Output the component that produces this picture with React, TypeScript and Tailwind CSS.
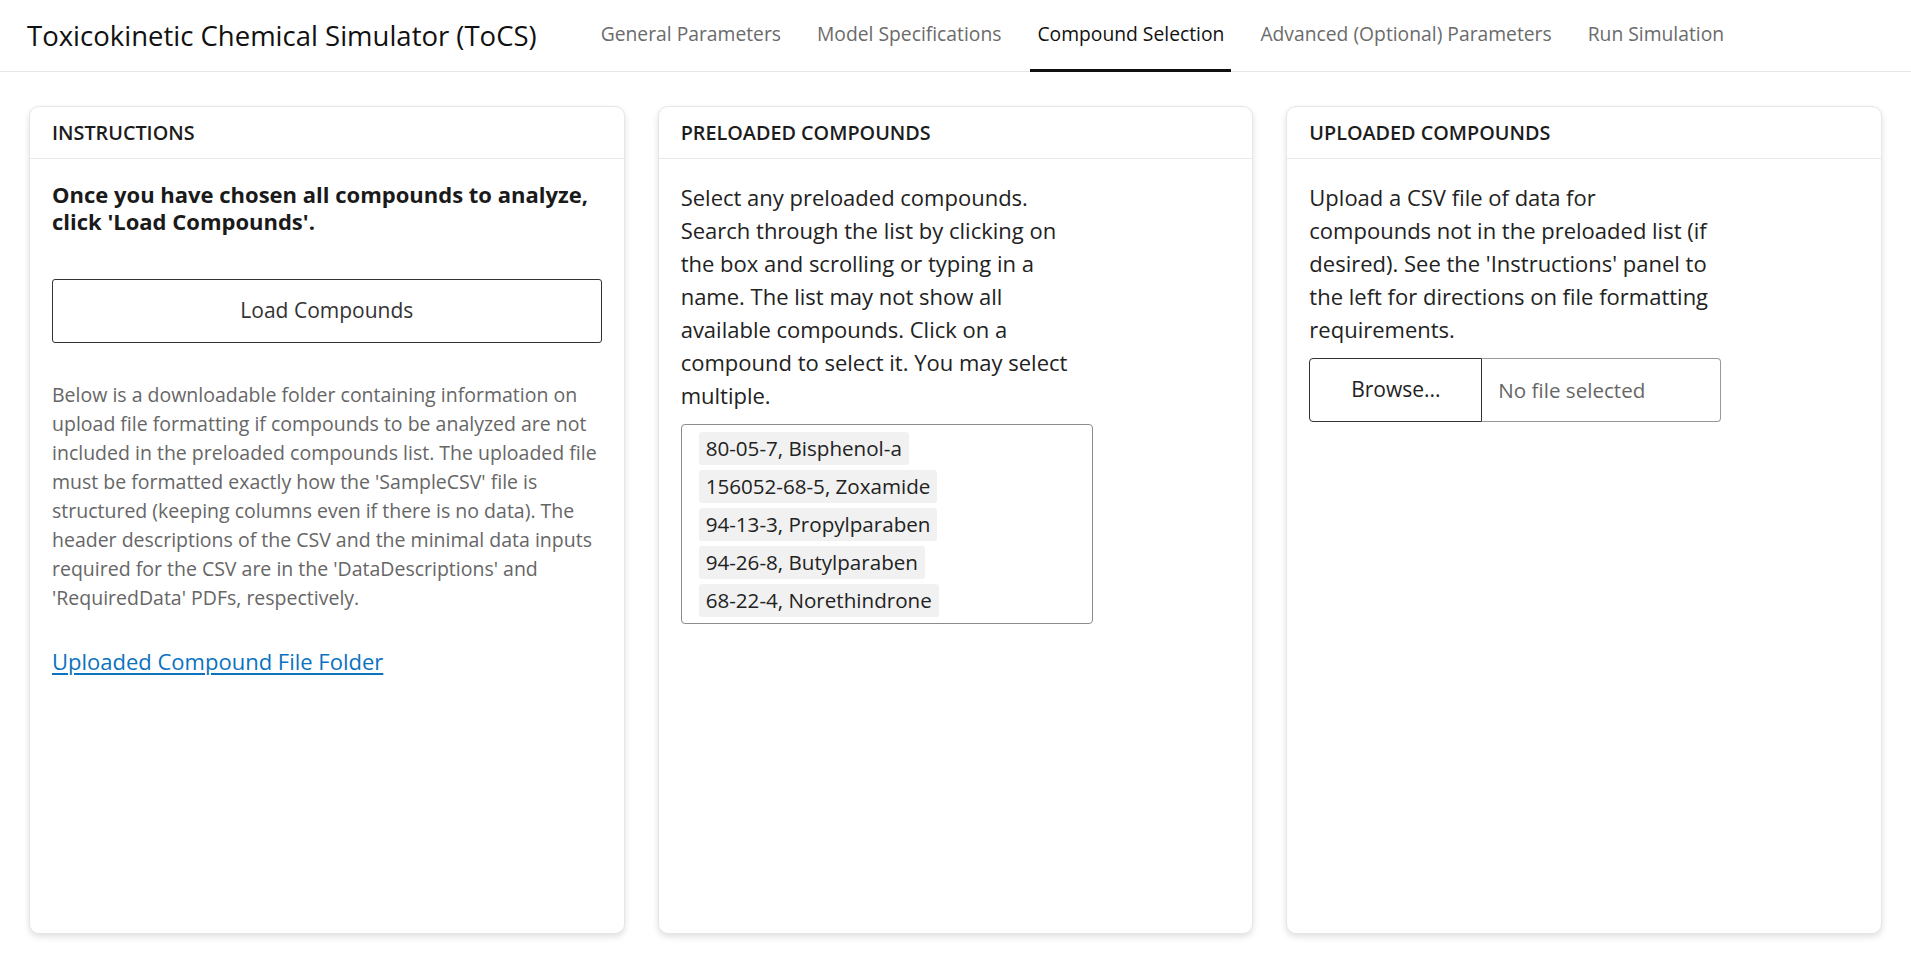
import React from "react";

const tabs = [
  { name: "General Parameters", active: false },
  { name: "Model Specifications", active: false },
  { name: "Compound Selection", active: true },
  { name: "Advanced (Optional) Parameters", active: false },
  { name: "Run Simulation", active: false },
];

const compounds = [
  "80-05-7, Bisphenol-a",
  "156052-68-5, Zoxamide",
  "94-13-3, Propylparaben",
  "94-26-8, Butylparaben",
  "68-22-4, Norethindrone",
];

const Card = ({ title, children }: { title: string; children: React.ReactNode }) => (
  <div className="h-[828px] rounded-[10px] border border-[#e6e6e6] bg-white shadow-[0_3px_6px_rgba(0,0,0,0.12)] flex flex-col">
    <div className="h-[52px] border-b border-[#e9e9e9] px-[22px] flex items-center">
      <h2 className="text-[19.8px] font-semibold uppercase text-[#1c1c1c]">{title}</h2>
    </div>
    <div className="px-[22px] pt-[22px]">{children}</div>
  </div>
);

export default function App() {
  return (
    <div className="min-h-screen bg-white font-['Open_Sans',sans-serif]">
      {/* Top bar */}
      <header className="h-[72px] border-b border-[#e6e6e6] flex items-stretch px-[27px]">
        <div className="flex items-center text-[27.5px] text-[#111] mr-[57px]">
          Toxicokinetic Chemical Simulator (ToCS)
        </div>
        <nav className="flex items-stretch gap-[22px]">
          {tabs.map((tab) => (
            <a
              key={tab.name}
              href="#"
              className={
                tab.active
                  ? "flex items-center px-[7px] border-b-[3px] border-[#111] text-[19.3px] text-[#111] mb-[-1px]"
                  : "flex items-center px-[7px] border-b-[3px] border-transparent text-[19.3px] text-[#6b6b6b] mb-[-1px]"
              }
            >
              {tab.name}
            </a>
          ))}
        </nav>
      </header>

      <main className="grid grid-cols-3 gap-[33px] px-[29px] pt-[34px] pb-[23px]">
        {/* Instructions */}
        <Card title="Instructions">
          <p className="text-[22px] leading-[27px] font-bold text-[#1a1a1a]">
            Once you have chosen all compounds to analyze, click 'Load Compounds'.
          </p>
          <button className="mt-[44px] w-full h-[64px] rounded-[3px] border border-[#333] text-[21px] text-[#333]">
            Load Compounds
          </button>
          <p className="mt-[37px] text-[19.5px] leading-[29px] text-[#666]">
            Below is a downloadable folder containing information on upload file formatting if compounds to be
            analyzed are not included in the preloaded compounds list. The uploaded file must be formatted exactly
            how the 'SampleCSV' file is structured (keeping columns even if there is no data). The header
            descriptions of the CSV and the minimal data inputs required for the CSV are in the 'DataDescriptions'
            and 'RequiredData' PDFs, respectively.
          </p>
          <a href="#" className="mt-[33px] inline-block text-[22px] text-[#0a72c0] underline underline-offset-[3px]">
            Uploaded Compound File Folder
          </a>
        </Card>

        {/* Preloaded */}
        <Card title="Preloaded Compounds">
          <p className="w-[412px] text-[22px] leading-[33px] text-[#222]">
            Select any preloaded compounds. Search through the list by clicking on the box and scrolling or typing
            in a name. The list may not show all available compounds. Click on a compound to select it. You may
            select multiple.
          </p>
          <div className="mt-[12px] w-[412px] h-[200px] rounded-[4px] border border-[#8c8c8c] pl-[17px] pt-[7px] flex flex-col items-start gap-[5px]">
            {compounds.map((c) => (
              <span
                key={c}
                className="h-[33px] px-[7px] flex items-center rounded-[3px] bg-[#f1f1f1] text-[20.6px] text-[#222]"
              >
                {c}
              </span>
            ))}
          </div>
        </Card>

        {/* Uploaded */}
        <Card title="Uploaded Compounds">
          <p className="w-[412px] text-[22px] leading-[33px] text-[#222]">
            Upload a CSV file of data for compounds not in the preloaded list (if desired). See the 'Instructions'
            panel to the left for directions on file formatting requirements.
          </p>
          <div className="mt-[12px] w-[412px] h-[64px] flex">
            <button className="w-[173px] rounded-l-[4px] border border-[#333] text-[21px] text-[#222]">
              Browse...
            </button>
            <div className="flex-1 flex items-center pl-[16px] rounded-r-[4px] border border-l-0 border-[#999] text-[20.6px] text-[#666]">
              No file selected
            </div>
          </div>
        </Card>
      </main>
    </div>
  );
}
